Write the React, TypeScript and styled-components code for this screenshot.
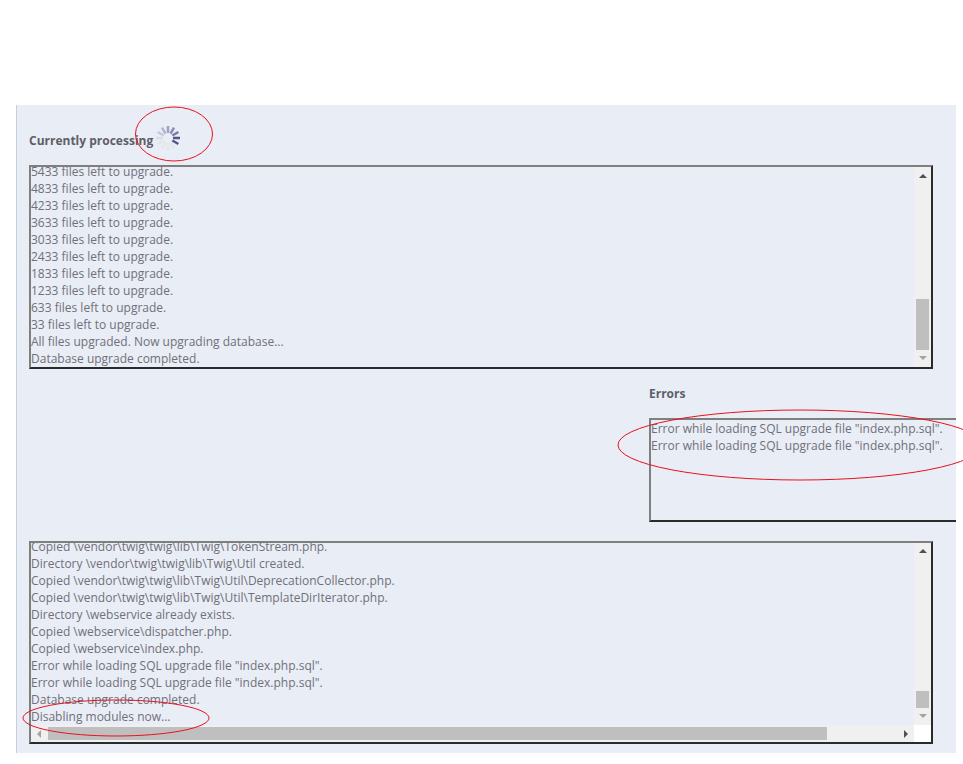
import styled, { createGlobalStyle } from "styled-components";

const GlobalStyle = createGlobalStyle`
  html, body {
    margin: 0;
    padding: 0;
    background: #fff;
    overflow: hidden;
  }
  body {
    font-family: "Open Sans", "Liberation Sans", sans-serif;
  }
`;

const Page = styled.div`
  position: relative;
  width: 963px;
  height: 764px;
  padding: 105px 7px 0 16px;
  box-sizing: border-box;
  overflow: hidden;
`;

const Panel = styled.div`
  width: 940px;
  height: 648px;
  box-sizing: border-box;
  padding: 23px 0 0 12px;
  background: #e9edf5;
  border-left: 1px solid #c9cede;
  overflow: hidden;
  display: flex;
  flex-direction: column;
`;

const Heading = styled.div`
  display: flex;
  align-items: center;
  height: 24px;
  font-size: 12px;
  font-weight: 700;
  color: #5e5e68;
`;

const ProcessingHeading = styled(Heading)`
  margin-bottom: 13px;
`;

const Spinner = styled.svg`
  width: 26px;
  height: 26px;
  margin: -5px 0 0 2px;
`;

const LogBox = styled.div<{ $w: number; $h: number }>`
  position: relative;
  flex: none;
  width: ${(p) => p.$w}px;
  height: ${(p) => p.$h}px;
  box-sizing: border-box;
  border: 2px solid;
  border-color: #7f7f7f #2b2b2b #2b2b2b #7f7f7f;
  display: grid;
  grid-template-columns: 1fr 17px;
  grid-template-rows: 1fr auto;
  overflow: hidden;
`;

const LogText = styled.div<{ $top?: boolean }>`
  min-width: 0;
  min-height: 0;
  overflow: hidden;
  display: flex;
  flex-direction: column;
  justify-content: ${(p) => (p.$top ? "flex-start" : "flex-end")};
`;

const Line = styled.div`
  flex: none;
  height: 17px;
  line-height: 17px;
  font-size: 12px;
  color: #70707a;
  white-space: nowrap;
`;

const VTrack = styled.div<{ $pad: number }>`
  background: #f0f0f0;
  display: flex;
  flex-direction: column;
  align-items: center;
  padding-top: ${(p) => p.$pad}px;
`;

const VThumb = styled.div<{ $h: number; $space: number }>`
  width: 13px;
  height: ${(p) => p.$h}px;
  margin-top: ${(p) => p.$space}px;
  background: #bfbfbf;
`;

const ArrowUp = styled.div`
  width: 0;
  height: 0;
  border-left: 4px solid transparent;
  border-right: 4px solid transparent;
  border-bottom: 4px solid #505050;
`;

const ArrowDown = styled.div`
  width: 0;
  height: 0;
  margin-top: 6px;
  border-left: 4px solid transparent;
  border-right: 4px solid transparent;
  border-top: 4px solid #a3a3a3;
`;

const HTrack = styled.div`
  height: 17px;
  background: #f0f0f0;
  display: flex;
  align-items: center;
`;

const ArrowLeft = styled.div`
  flex: none;
  width: 0;
  height: 0;
  margin: 0 7px 0 6px;
  border-top: 4px solid transparent;
  border-bottom: 4px solid transparent;
  border-right: 4px solid #a3a3a3;
`;

const HThumb = styled.div`
  flex: none;
  width: 779px;
  height: 13px;
  background: #bfbfbf;
`;

const ArrowRight = styled.div`
  flex: none;
  width: 0;
  height: 0;
  margin-left: 77px;
  border-top: 4px solid transparent;
  border-bottom: 4px solid transparent;
  border-left: 4px solid #505050;
`;

const Corner = styled.div`
  background: #fff;
`;

const ErrorsSection = styled.div`
  flex: none;
  margin: 13px 0 0 620px;
`;

const ErrorsTitle = styled(Heading)`
  height: 22px;
  margin-bottom: 14px;
`;

const LowerBox = styled.div`
  margin-top: 19px;
`;

const Annotations = styled.svg`
  position: absolute;
  left: 0;
  top: 0;
  width: 963px;
  height: 764px;
  pointer-events: none;
`;

const upgradeLines = [
  "5433 files left to upgrade.",
  "4833 files left to upgrade.",
  "4233 files left to upgrade.",
  "3633 files left to upgrade.",
  "3033 files left to upgrade.",
  "2433 files left to upgrade.",
  "1833 files left to upgrade.",
  "1233 files left to upgrade.",
  "633 files left to upgrade.",
  "33 files left to upgrade.",
  "All files upgraded. Now upgrading database...",
  "Database upgrade completed.",
];

const sqlError = 'Error while loading SQL upgrade file "index.php.sql".';

const copyLines = [
  "Copied \\vendor\\twig\\twig\\lib\\Twig\\TokenStream.php.",
  "Directory \\vendor\\twig\\twig\\lib\\Twig\\Util created.",
  "Copied \\vendor\\twig\\twig\\lib\\Twig\\Util\\DeprecationCollector.php.",
  "Copied \\vendor\\twig\\twig\\lib\\Twig\\Util\\TemplateDirIterator.php.",
  "Directory \\webservice already exists.",
  "Copied \\webservice\\dispatcher.php.",
  "Copied \\webservice\\index.php.",
  sqlError,
  sqlError,
  "Database upgrade completed.",
  "Disabling modules now...",
];

// clockwise from 12 o'clock
const spokeColors = [
  "#a0a0c0", "#8c8cb4", "#7a7aa8", "#55558c",
  "#55558c", "#e4e6ea", "#e6e6e6", "#e6e6e2",
  "#e6e6e2", "#dcdce4", "#c8c8d8", "#b4b4cc",
];

function App() {
  return (
    <>
      <GlobalStyle />
      <Page>
        <Panel>
          <ProcessingHeading>
            Currently processing
            <Spinner viewBox="0 0 26 26">
              {spokeColors.map((color, i) => (
                <rect
                  key={i}
                  x="11.75"
                  y="1"
                  width="2.5"
                  height="7"
                  fill={color}
                  transform={`rotate(${i * 30} 13 13)`}
                />
              ))}
            </Spinner>
          </ProcessingHeading>
          <LogBox $w={904} $h={204}>
            <LogText>
              {upgradeLines.map((line, i) => (
                <Line key={i}>{line}</Line>
              ))}
            </LogText>
            <VTrack $pad={7}>
              <ArrowUp />
              <VThumb $h={51} $space={121} />
              <ArrowDown />
            </VTrack>
          </LogBox>
          <ErrorsSection>
            <ErrorsTitle>Errors</ErrorsTitle>
            <LogBox $w={330} $h={104}>
              <LogText $top>
                <Line>{sqlError}</Line>
                <Line>{sqlError}</Line>
              </LogText>
            </LogBox>
          </ErrorsSection>
          <LowerBox>
            <LogBox $w={904} $h={203}>
              <LogText>
                {copyLines.map((line, i) => (
                  <Line key={i}>{line}</Line>
                ))}
              </LogText>
              <VTrack $pad={6}>
                <ArrowUp />
                <VThumb $h={17} $space={138} />
                <ArrowDown />
              </VTrack>
              <HTrack>
                <ArrowLeft />
                <HThumb />
                <ArrowRight />
              </HTrack>
              <Corner />
            </LogBox>
          </LowerBox>
        </Panel>
        <Annotations viewBox="0 0 963 764">
          <ellipse cx="174" cy="134" rx="38.5" ry="27" fill="none" stroke="#e8121f" strokeWidth="1" />
          <ellipse cx="800" cy="445" rx="182" ry="35" fill="none" stroke="#e8121f" strokeWidth="1" />
          <ellipse cx="116" cy="718" rx="93" ry="18" fill="none" stroke="#e8121f" strokeWidth="1" />
        </Annotations>
      </Page>
    </>
  );
}

export default App;
